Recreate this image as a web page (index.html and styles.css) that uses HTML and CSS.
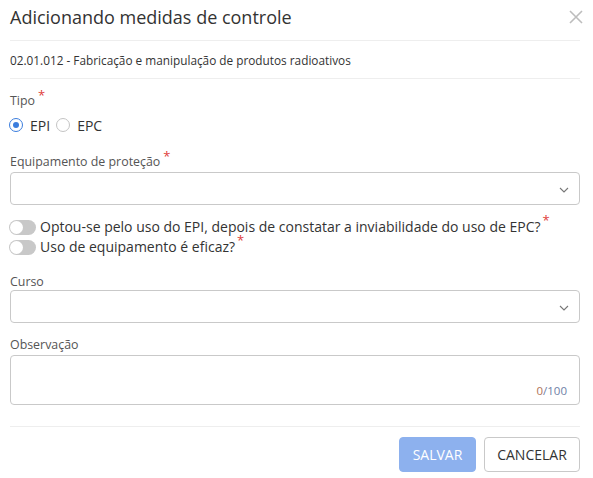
FILE: index.html
```html
<!DOCTYPE html>
<html lang="pt">
<head>
<meta charset="utf-8">
<link rel="stylesheet" href="styles.css">
</head>
<body>
<div class="dialog">
  <div class="header">
    <h1 class="title">Adicionando medidas de controle</h1>
    <span class="close">
      <svg width="14" height="14" viewBox="0 0 14 14"><path d="M1 1L13 13M13 1L1 13" stroke="#bdbdbd" stroke-width="1.6" fill="none"/></svg>
    </span>
  </div>
  <div class="subtitle">02.01.012 - Fabricação e manipulação de produtos radioativos</div>
  <div class="body">
    <div class="label lbl-tipo">Tipo<span class="req">*</span></div>
    <div class="radios">
      <span class="radio checked"></span><span class="rtext">EPI</span>
      <span class="radio"></span><span class="rtext">EPC</span>
    </div>
    <div class="label lbl-equip">Equipamento de proteção<span class="req">*</span></div>
    <div class="select">
      <svg class="chev" width="10" height="6" viewBox="0 0 10 6"><path d="M1 1L5 5L9 1" stroke="#777" stroke-width="1.1" fill="none"/></svg>
    </div>
    <div class="toggles">
      <div class="toggle-row"><span class="toggle"></span><span class="ttext">Optou-se pelo uso do EPI, depois de constatar a inviabilidade do uso de EPC?</span><span class="req treq">*</span></div>
      <div class="toggle-row"><span class="toggle"></span><span class="ttext">Uso de equipamento é eficaz?</span><span class="req treq">*</span></div>
    </div>
    <div class="label lbl-curso">Curso</div>
    <div class="select sel-curso">
      <svg class="chev" width="10" height="6" viewBox="0 0 10 6"><path d="M1 1L5 5L9 1" stroke="#777" stroke-width="1.1" fill="none"/></svg>
    </div>
    <div class="label lbl-obs">Observação</div>
    <div class="textarea"><span class="count"><span class="cur">0</span><span class="sl">/100</span></span></div>
  </div>
  <div class="footer">
    <button class="btn btn-primary">SALVAR</button>
    <button class="btn btn-default">CANCELAR</button>
  </div>
</div>
</body>
</html>
```
FILE: styles.css
```css
* { box-sizing: border-box; }
html, body { margin: 0; padding: 0; background: #fff; }
body { font-family: "Open Sans", "Noto Sans", sans-serif; color: #333; }
.dialog { padding: 0 13px 0 10px; width: 593px; }
.header { display: flex; align-items: center; justify-content: space-between; height: 41px; border-bottom: 1px solid #eeeeee; }
.title { margin: 0; font-size: 18px; font-weight: 400; color: #333; line-height: 24px; padding-bottom: 6px; }
.close { display: flex; width: 14px; height: 14px; margin-right: -3px; margin-bottom: 6px; }
.subtitle { height: 38px; display: flex; align-items: center; font-size: 11.8px; color: #333; border-bottom: 1px solid #eeeeee; padding-top: 1px; }
.body { padding-top: 14px; }
.label { font-size: 12.4px; color: #555; line-height: 16px; height: 16px; white-space: nowrap; }
.req { color: #e0403a; font-size: 13px; line-height: 10px; position: relative; top: -5px; margin-left: 3px; }
.radios { display: flex; align-items: center; height: 20px; margin-top: 6px; }
.radio { width: 14px; height: 14px; border-radius: 50%; border: 1.5px solid #c4c4c4; margin-left: -1px; flex: none; }
.radio.checked { border: 1.5px solid #3b7ddd; display: flex; align-items: center; justify-content: center; }
.radio.checked::after { content: ""; width: 6px; height: 6px; border-radius: 50%; background: #3b7ddd; }
.rtext { font-size: 14px; color: #333; margin-left: 7px; margin-right: 7px; }
.lbl-equip { margin-top: 19px; }
.select { position: relative; height: 33px; border: 1px solid #c9c9c9; border-radius: 4px; margin-top: 2px; }
.sel-curso { margin-top: 0; }
.chev { position: absolute; right: 10px; top: 14px; }
.toggles { margin-top: 12px; display: flex; flex-direction: column; }
.toggle-row { display: flex; align-items: center; height: 20px; }
.toggle { width: 27px; height: 15px; border-radius: 8px; background: #c8c8c8; position: relative; margin-left: -1px; flex: none; }
.toggle::after { content: ""; position: absolute; left: 1px; top: 1px; width: 13px; height: 13px; border-radius: 50%; background: #fff; }
.ttext { font-size: 14px; color: #333; margin-left: 4px; white-space: nowrap; line-height: 18px; }
.treq { top: -7px; margin-left: 2px; }
.lbl-curso { margin-top: 17px; }
.lbl-obs { margin-top: 14px; }
.textarea { height: 50px; border: 1px solid #c9c9c9; border-radius: 4px; margin-top: 2px; display: flex; justify-content: flex-end; align-items: flex-end; padding: 0 12px 6px 0; }
.count { font-size: 11.5px; line-height: 14px; }
.count .cur { color: #b07256; }
.count .sl { color: #6f80a6; }
.footer { margin-top: 21px; border-top: 1px solid #eeeeee; display: flex; justify-content: flex-end; gap: 8px; padding-top: 10px; }
.btn { font-family: "Open Sans", "Noto Sans", sans-serif; font-size: 14px; height: 35px; border-radius: 4px; padding: 0 10px; cursor: pointer; }
.btn-primary { background: #8db1ee; color: #fff; border: 1px solid #8db1ee; width: 77px; }
.btn-default { background: #fff; color: #333; border: 1px solid #c9c9c9; width: 96px; }
```
